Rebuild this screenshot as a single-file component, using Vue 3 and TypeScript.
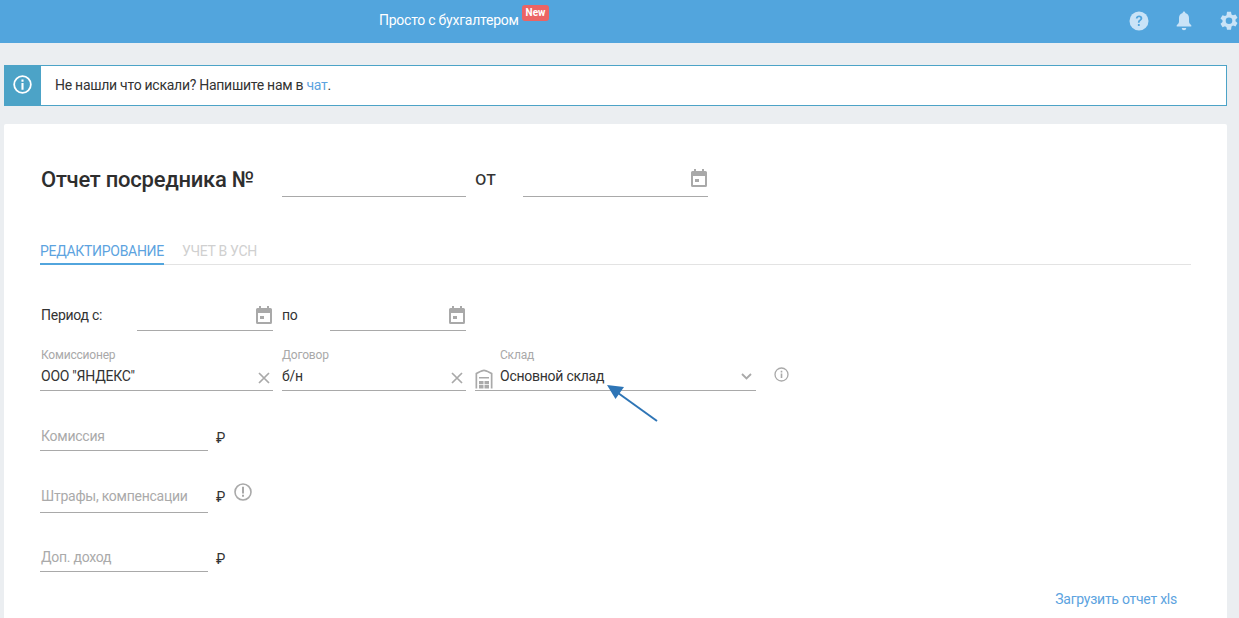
<script setup lang="ts">
const calendarPath = 'M3 0h2v2h6V0h2v2h1.500A1.500 1.500 0 0 1 16 3.500V16.500A1.500 1.500 0 0 1 14.500 18H1.500A1.500 1.500 0 0 1 0 16.500V3.500A1.500 1.500 0 0 1 1.500 2H3zM2 7v9h12V7zM4 10h4v3H4z'
</script>

<template>
  <div class="page">
    <header class="top">
      <div class="brand">
        <span>Просто с бухгалтером</span>
        <span class="new">New</span>
      </div>
      <div class="top-icons">
        <svg width="20" height="20" viewBox="0 0 20 20"><circle cx="10" cy="10" r="9.500" fill="#c9e3f7" /><path d="M6.800 7.600C6.900 5.700 8.300 4.600 10.100 4.600c1.900 0 3.200 1.100 3.200 2.700 0 1.300-.8 2-1.700 2.600-.8.500-1 .9-1 1.800H8.900c0-1.500.4-2.200 1.400-2.900.8-.5 1.100-.9 1.100-1.400 0-.7-.5-1.200-1.300-1.200-.9 0-1.400.5-1.500 1.400z M8.900 13h1.800v2H8.900z" fill="#52a5dd" /></svg>
        <svg width="16" height="20" viewBox="0 0 16 20"><path d="M8 0.500c.8 0 1.300.6 1.300 1.400 2.400.6 3.700 2.500 3.700 5v3.600c0 1.500.8 2.500 2.300 3.700v1.300H.7v-1.300C2.200 13 3 12 3 10.500V6.900c0-2.500 1.300-4.400 3.700-5C6.700 1.100 7.200.5 8 .5zM5.800 17h4.400c0 1.300-1 2.300-2.200 2.300S5.800 18.300 5.800 17z" fill="#c9e3f7" /></svg>
        <svg class="gear" width="18" height="20" viewBox="0 0 18 20"><path fill-rule="evenodd" d="M7 .8h4l.5 2.600 1.500.9 2.500-.9 2 3.400-2 1.700v1.800l2 1.700-2 3.400-2.500-.9-1.500.9L11 18.800H7l-.5-2.600-1.500-.9-2.500.9-2-3.400 2-1.700V9.300l-2-1.700 2-3.400 2.500.9 1.500-.9zM9 6.500a3.300 3.300 0 1 0 0 6.600 3.300 3.300 0 0 0 0-6.600z" fill="#c9e3f7" /></svg>
      </div>
    </header>

    <div class="alert">
      <div class="alert-icon">
        <svg width="19" height="19" viewBox="0 0 18 18"><circle cx="9" cy="9" r="7.900" fill="none" stroke="#fff" stroke-width="1.700" /><path d="M8 7.500h2V14H8zM8 4.300h2v2H8z" fill="#fff" /></svg>
      </div>
      <div class="alert-text">Не нашли что искали? Напишите нам в <a class="link">чат</a>.</div>
    </div>

    <main class="card">
      <div class="title-row">
        <h1>Отчет посредника №</h1>
        <div class="line w184"></div>
        <span class="ot">от</span>
        <div class="line w185 date">
          <svg class="cal" width="16" height="18" viewBox="0 0 16 18"><path :d="calendarPath" fill="#a9a9a9" fill-rule="evenodd" /></svg>
        </div>
      </div>

      <nav class="tabs">
        <span class="tab active">РЕДАКТИРОВАНИЕ</span>
        <span class="tab">УЧЕТ В УСН</span>
      </nav>

      <div class="period">
        <span class="period-label">Период с:</span>
        <div class="line w136 date">
          <svg class="cal" width="16" height="18" viewBox="0 0 16 18"><path :d="calendarPath" fill="#a9a9a9" fill-rule="evenodd" /></svg>
        </div>
        <span class="po">по</span>
        <div class="line w136 date">
          <svg class="cal" width="16" height="18" viewBox="0 0 16 18"><path :d="calendarPath" fill="#a9a9a9" fill-rule="evenodd" /></svg>
        </div>
      </div>

      <div class="selects">
        <div class="field f1">
          <label>Комиссионер</label>
          <div class="value">ООО "ЯНДЕКС"</div>
          <svg class="x" width="12" height="12" viewBox="0 0 12 12"><path d="M1 1l10 10M11 1L1 11" stroke="#a9a9a9" stroke-width="1.700" /></svg>
        </div>
        <div class="field f2">
          <label>Договор</label>
          <div class="value">б/н</div>
          <svg class="x" width="12" height="12" viewBox="0 0 12 12"><path d="M1 1l10 10M11 1L1 11" stroke="#a9a9a9" stroke-width="1.700" /></svg>
        </div>
        <div class="field f3">
          <svg class="store" width="18" height="20" viewBox="0 0 18 20"><path fill-rule="evenodd" d="M9 .5c3 .6 6 1.900 8.500 3.600V19.500H15.800V5.100C13.700 3.800 11.300 2.800 9 2.300 6.700 2.800 4.300 3.800 2.200 5.100V19.500H.5V4.100C3 2.400 6 1.100 9 .5zM4 8h10v1.500H4zM4 12h4.500v3.200H4zM9.500 12H14v3.200H9.500zM4 16h4.500v3.500H4zM9.500 16H14v3.500H9.500z" fill="#a9a9a9" /></svg>
          <label>Склад</label>
          <div class="value">Основной склад</div>
          <svg class="chev" width="11" height="7" viewBox="0 0 11 7"><path d="M1 1l4.500 4.500L10 1" fill="none" stroke="#a9a9a9" stroke-width="1.800" /></svg>
        </div>
        <svg class="info" width="15" height="15" viewBox="0 0 15 15"><circle cx="7.500" cy="7.500" r="6.500" fill="none" stroke="#a9a9a9" stroke-width="1.300" /><path d="M6.700 6.500h1.600V11H6.700zM6.700 3.800h1.600v1.600H6.700z" fill="#a9a9a9" /></svg>
      </div>

      <div class="money m1">
        <div class="money-line">Комиссия</div>
        <span class="rub">₽</span>
      </div>
      <div class="money m2">
        <div class="money-line">Штрафы, компенсации</div>
        <span class="rub">₽</span>
        <svg class="warn" width="18" height="18" viewBox="0 0 18 18"><circle cx="9" cy="9" r="8" fill="none" stroke="#a9a9a9" stroke-width="1.600" /><path d="M8 3.800h2v6.600H8zM8 11.800h2v1.900H8z" fill="#a9a9a9" /></svg>
      </div>
      <div class="money m3">
        <div class="money-line">Доп. доход</div>
        <span class="rub">₽</span>
      </div>

      <div class="upload"><a class="link">Загрузить отчет xls</a></div>
    </main>

    <svg class="arrow" width="60" height="44" viewBox="0 0 60 44">
      <path d="M53 38L12 8.500" stroke="#2e75b6" stroke-width="2" fill="none" />
      <path d="M3 2l17 2-8.500 12z" fill="#2e75b6" />
    </svg>
  </div>
</template>

<style>
html, body { margin: 0; height: 618px; overflow: hidden; background: #ebeef1; }
</style>

<style scoped>
.page { position: relative; height: 618px; overflow: hidden; background: #ebeef1; font-family: Roboto, "Liberation Sans", sans-serif; font-size: 14px; letter-spacing: -0.25px; color: #333; }
.top { height: 43px; background: #52a5dd; display: flex; align-items: center; justify-content: space-between; color: #fff; }
.brand { margin-left: 379px; display: flex; align-items: flex-start; height: 43px; line-height: 41px; }
.new { margin: 5px 0 0 3px; height: 16px; padding: 0 4px; background: #ec6464; color: #fff; font-size: 10px; letter-spacing: 0; font-weight: 700; line-height: 15px; border-radius: 3px; }
.top-icons { display: flex; align-items: center; gap: 27px; margin-right: 1px; margin-top: -1px; }
.top-icons svg { display: block; }
.top-icons .gear { margin-left: 1px; }
.alert { margin: 22px 12px 0 4px; height: 41px; box-sizing: border-box; border: 1px solid #4ca3c7; display: flex; background: #fff; }
.alert-icon { width: 37px; margin: -1px 0 -1px -1px; background: #4ca3c7; display: flex; align-items: center; justify-content: center; flex: none; padding-bottom: 2px; box-sizing: border-box; }
.alert-text { padding-left: 14px; line-height: 38px; letter-spacing: -0.27px; }
.link { color: #5ca3e0; }
.card { margin: 18px 12px 0 4px; height: 520px; background: #fff; border-radius: 2px; padding: 0 36px; box-sizing: border-box; }
.title-row { display: flex; align-items: flex-end; height: 73px; }
h1 { margin: 0 29px 0 1px; width: 212px; font-size: 22px; letter-spacing: -0.25px; font-weight: 500; line-height: 28px; align-self: flex-end; padding-bottom: 3px; white-space: nowrap; color: #2e2e2e; }
.line { height: 34px; border-bottom: 1px solid #a9a9a9; box-sizing: border-box; position: relative; flex: none; }
.w184 { width: 184px; }
.w185 { width: 185px; }
.w136 { width: 136px; }
.ot { margin: 0 0 0 9px; width: 48px; font-size: 20px; letter-spacing: 0; line-height: 34px; padding-bottom: 2px; }
.cal { position: absolute; right: 1px; top: 6px; }
.tabs { margin-top: 36px; height: 32px; border-bottom: 1px solid #e3e3e3; display: flex; gap: 18px; box-sizing: border-box; width: 1151px; }
.tab { color: #d0d0d0; line-height: 37px; height: 32px; box-sizing: border-box; letter-spacing: -0.3px; }
.tab.active { color: #5ca3e0; border-bottom: 2px solid #52a5dd; }
.period { display: flex; align-items: flex-end; margin-top: 31px; height: 35px; }
.period-label { width: 96px; margin-left: 1px; line-height: 31px; }
.po { width: 48px; margin: 0 0 0 9px; line-height: 31px; }
.period .line { height: 35px; }
.period .cal { top: 10px; }
.selects { display: flex; align-items: flex-start; gap: 9px; margin-top: 15px; height: 45px; position: relative; }
.field { position: relative; height: 45px; border-bottom: 1px solid #a9a9a9; box-sizing: border-box; }
.f1 { width: 233px; }
.f2 { width: 184px; }
.f3 { width: 281px; padding-left: 24px; }
.field label { display: block; font-size: 12px; letter-spacing: -0.2px; line-height: 16px; color: #a9a9a9; padding-left: 1px; margin-top: 1px; }
.value { line-height: 22px; margin-top: 2px; padding-left: 1px; color: #333; }
.f2 .value, .f2 label { padding-left: 0; }
.x { position: absolute; right: 3px; top: 26px; }
.store { position: absolute; left: 0; top: 23px; }
.chev { position: absolute; right: 4px; top: 27px; }
.info { position: absolute; left: 734px; top: 21px; }
.money { position: relative; display: flex; width: 200px; height: 34px; }
.money-line { width: 168px; height: 34px; box-sizing: border-box; border-bottom: 1px solid #a9a9a9; color: #aaa; padding-left: 1px; white-space: nowrap; flex: none; }
.m1 .money-line, .m3 .money-line { line-height: 39px; }
.m2 .money-line { line-height: 35px; }
.rub { margin-left: 8px; color: #333; font-size: 14px; }
.m1 .rub, .m3 .rub { line-height: 42px; }
.m2 .rub { line-height: 37px; }
.m1 { margin-top: 26px; }
.m2 { margin-top: 28px; }
.m3 { margin-top: 25px; }
.warn { position: absolute; left: 194px; top: 4px; }
.upload { margin-top: 18px; text-align: right; width: 1137px; line-height: 18px; }
.arrow { position: absolute; left: 604px; top: 383px; }
</style>
